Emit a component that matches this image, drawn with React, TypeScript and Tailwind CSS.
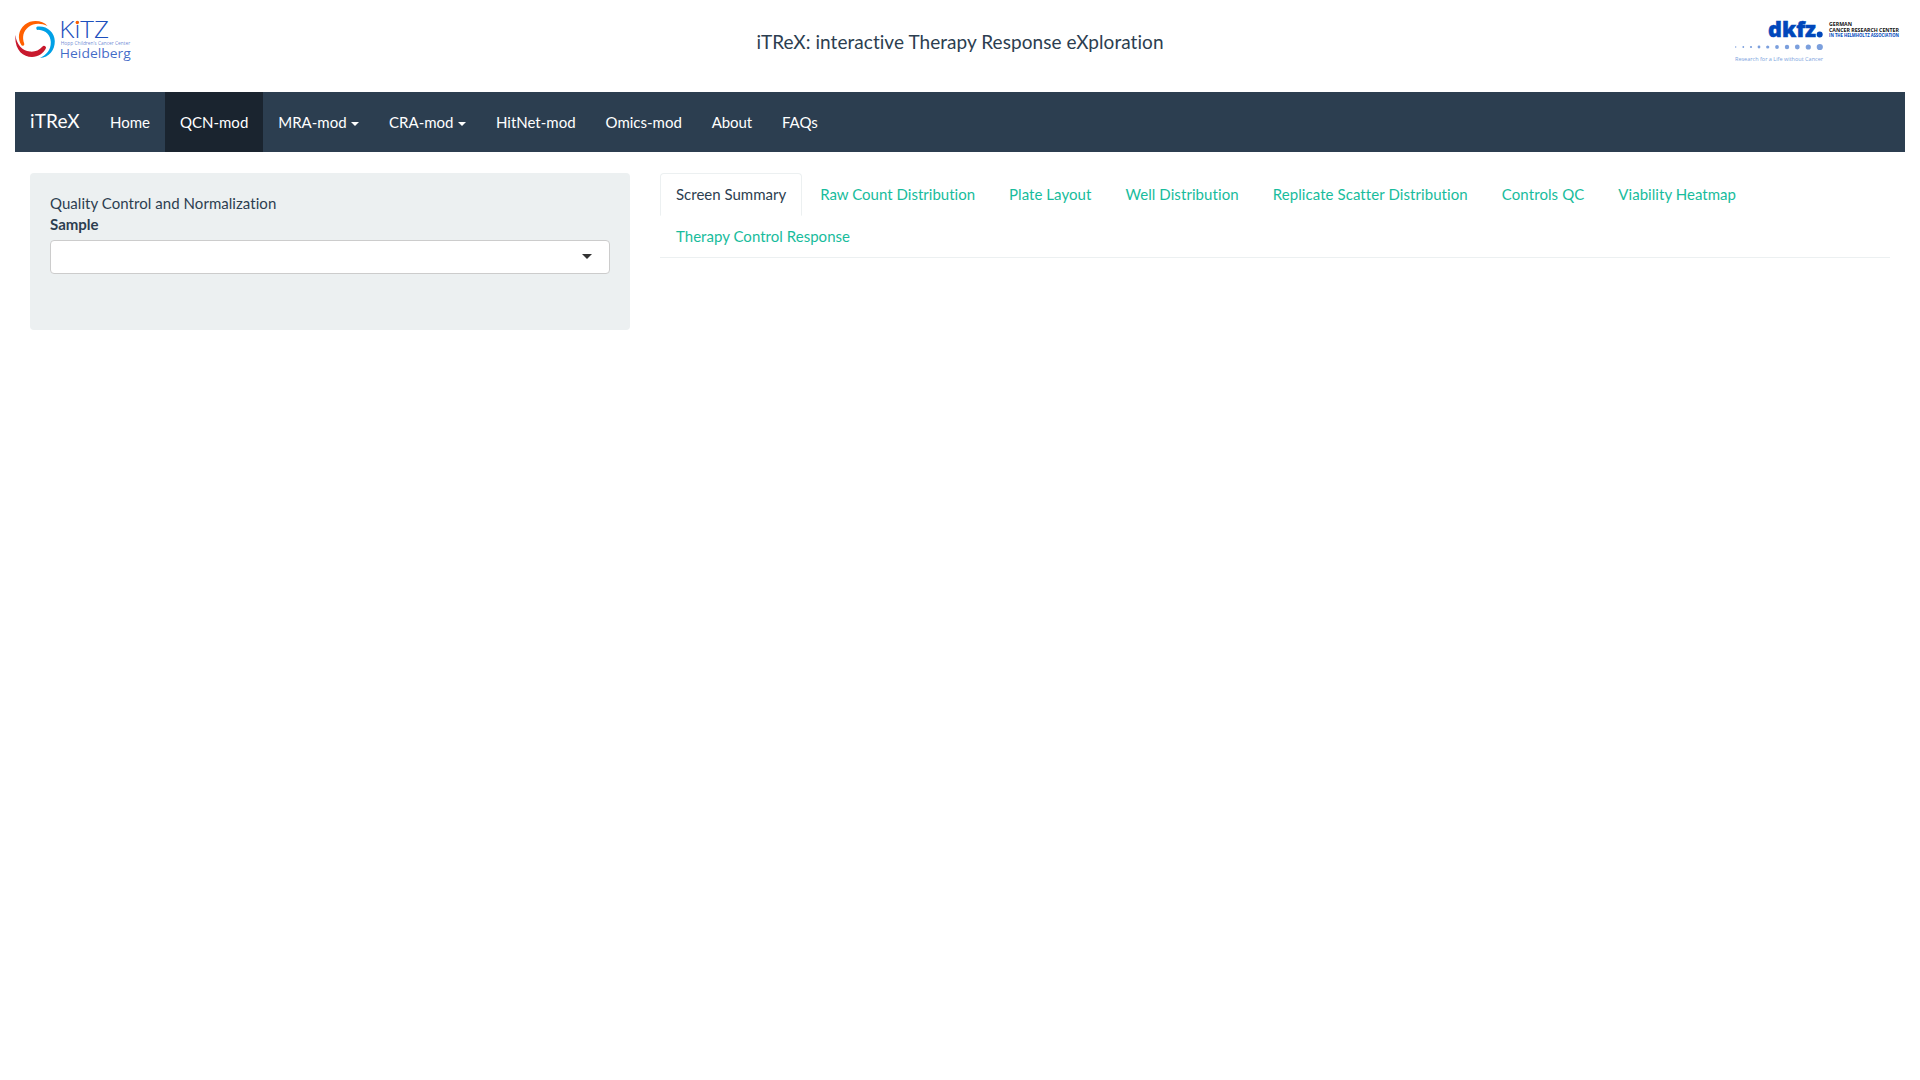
import React from "react";

const navItems = [
  { label: "Home" },
  { label: "QCN-mod", active: true },
  { label: "MRA-mod", menu: true },
  { label: "CRA-mod", menu: true },
  { label: "HitNet-mod" },
  { label: "Omics-mod" },
  { label: "About", spacing: "tracking-[-0.15px]" },
  { label: "FAQs" },
];

const tabs = [
  { label: "Screen Summary", spacing: "" },
  { label: "Raw Count Distribution", spacing: "tracking-[0.015px]" },
  { label: "Plate Layout", spacing: "tracking-[0.05px]" },
  { label: "Well Distribution", spacing: "tracking-[0.08px]" },
  { label: "Replicate Scatter Distribution", spacing: "tracking-[0.08px]" },
  { label: "Controls QC", spacing: "tracking-[0.09px]" },
  { label: "Viability Heatmap", spacing: "tracking-[0.04px]" },
  { label: "Therapy Control Response", spacing: "tracking-[0.03px]" },
];

const dots = [
  [1735.7, 0.7], [1743.3, 0.9], [1751, 1.1], [1759, 1.4], [1767.7, 1.6],
  [1777, 1.9], [1787, 2.2], [1797.3, 2.4], [1808.3, 2.6], [1819.8, 3.1],
];

function KitzLogo() {
  return (
    <svg width="120" height="50" viewBox="15 15 120 50" fontFamily="Open Sans, sans-serif">
      <path d="M15.3 35 C14.5 50 23 57 32 57 C38 57 44 53 46 48 A2 2 0 0 0 42.5 46.5 C39 50.5 35 52 30 51.6 C22 51 16.5 44 15.3 35Z" fill="#c8192d" />
      <path d="M47.5 26 C43 20.5 32 19 25 24.5 C18 30 17.5 39 21.2 44.8 A1.6 1.6 0 0 0 24.2 43.6 C22 37 23 31.5 28.5 27 C34 22.8 41 23 47.5 26Z" fill="#ff6000" />
      <path d="M37.5 26.5 C47 25.5 54.5 32 54.8 41 C55 50 49 57.5 40 58 C46 55 51 50.5 50.8 42 C50.5 35 46 30.3 38.5 29.8 A1.7 1.7 0 0 1 37.5 26.5Z" fill="#00a0e6" />
      <g fill="#1d50bd">
        <text x="59.3" y="38" fontSize="23.5" fontWeight="300" textLength="49.7" lengthAdjust="spacingAndGlyphs">KiTZ</text>
        <text x="60.7" y="45.2" fontSize="4.4" fillOpacity="0.7" textLength="69.5" lengthAdjust="spacingAndGlyphs">Hopp Children’s Cancer Center</text>
        <text x="59.8" y="58.2" fontSize="13" fillOpacity="0.85" textLength="71" lengthAdjust="spacingAndGlyphs">Heidelberg</text>
      </g>
      <circle cx="77.3" cy="22.5" r="1.7" fill="#ff6000" />
    </svg>
  );
}

function DkfzLogo() {
  return (
    <svg width="170" height="50" viewBox="1735 15 170 50" fontFamily="Open Sans, sans-serif">
      <text x="1768" y="37.2" fontSize="21" fontWeight="800" fill="#0047bb" stroke="#0047bb" strokeWidth="0.5" textLength="48" lengthAdjust="spacingAndGlyphs">dkfz</text>
      <circle cx="1819.7" cy="34.4" r="3" fill="#0047bb" />
      {dots.map(([x, r]) => (
        <circle key={x} cx={x} cy="47" r={r} fill="#7b9fdd" />
      ))}
      <text x="1735" y="60.5" fontSize="6" fill="#7b9fdd" textLength="88" lengthAdjust="spacingAndGlyphs">Research for a Life without Cancer</text>
      <g fontSize="5.3" fontWeight="700">
        <text x="1829" y="25.5" fill="#111" textLength="23" lengthAdjust="spacingAndGlyphs">GERMAN</text>
        <text x="1829" y="31.8" fill="#111" textLength="70" lengthAdjust="spacingAndGlyphs">CANCER RESEARCH CENTER</text>
        <text x="1829" y="37.3" fontSize="4.6" fill="#0047bb" textLength="70" lengthAdjust="spacingAndGlyphs">IN THE HELMHOLTZ ASSOCIATION</text>
      </g>
    </svg>
  );
}

export default function App() {
  return (
    <div className="min-h-screen bg-white px-[15px] font-['Lato',sans-serif] text-[15px] leading-[21.43px] text-[#2c3e50] [font-variant-ligatures:none]">
      <header className="flex h-[92px] items-start justify-between pt-[15px]">
        <div className="flex w-[170px]"><KitzLogo /></div>
        <h1 className="mt-[13px] text-[19px] leading-[27px] tracking-[0.05px]">iTReX: interactive Therapy Response eXploration</h1>
        <div className="flex w-[170px]"><DkfzLogo /></div>
      </header>

      <nav className="flex h-[60px] bg-[#2c3e50] text-white">
        <a className="w-20 pl-[15px] pt-[18px] text-[19px] leading-[21px] tracking-[0.15px]">iTReX</a>
        {navItems.map((item) => (
          <a
            key={item.label}
            className={`flex px-[15px] pt-[19.5px] leading-[21px] ${item.active ? "bg-[#1a242f]" : ""} ${item.spacing ?? ""}`}
          >
            {item.label}
            {item.menu && (
              <span className="mt-[10.5px] ml-[4.5px] size-0 border-x-4 border-t-4 border-x-transparent border-t-white" />
            )}
          </a>
        ))}
      </nav>

      <main className="mt-[21px] flex gap-[30px] px-[15px]">
        <aside className="h-[157px] w-[600px] shrink-0 rounded-[4px] bg-[#ecf0f1] p-5">
          <p className="tracking-[0.05px]">Quality Control and Normalization</p>
          <p className="font-bold">Sample</p>
          <div className="mt-1 flex h-[34px] items-center justify-end rounded-[4px] border border-[#ccc] bg-white pr-[17px]">
            <span className="size-0 border-x-5 border-t-5 border-x-transparent border-t-[#333]" />
          </div>
        </aside>
        <ul className="flex h-[85px] grow flex-wrap content-start border-b border-[#ecf0f1]">
          {tabs.map((tab, i) => (
            <li
              key={tab.label}
              className={`-mb-px mr-[2px] rounded-t-[4px] border px-[15px] py-[10px] ${tab.spacing} ${
                i === 0 ? "border-[#ecf0f1] border-b-transparent" : "border-transparent text-[#18bc9c]"
              }`}
            >
              {tab.label}
            </li>
          ))}
        </ul>
      </main>
    </div>
  );
}
